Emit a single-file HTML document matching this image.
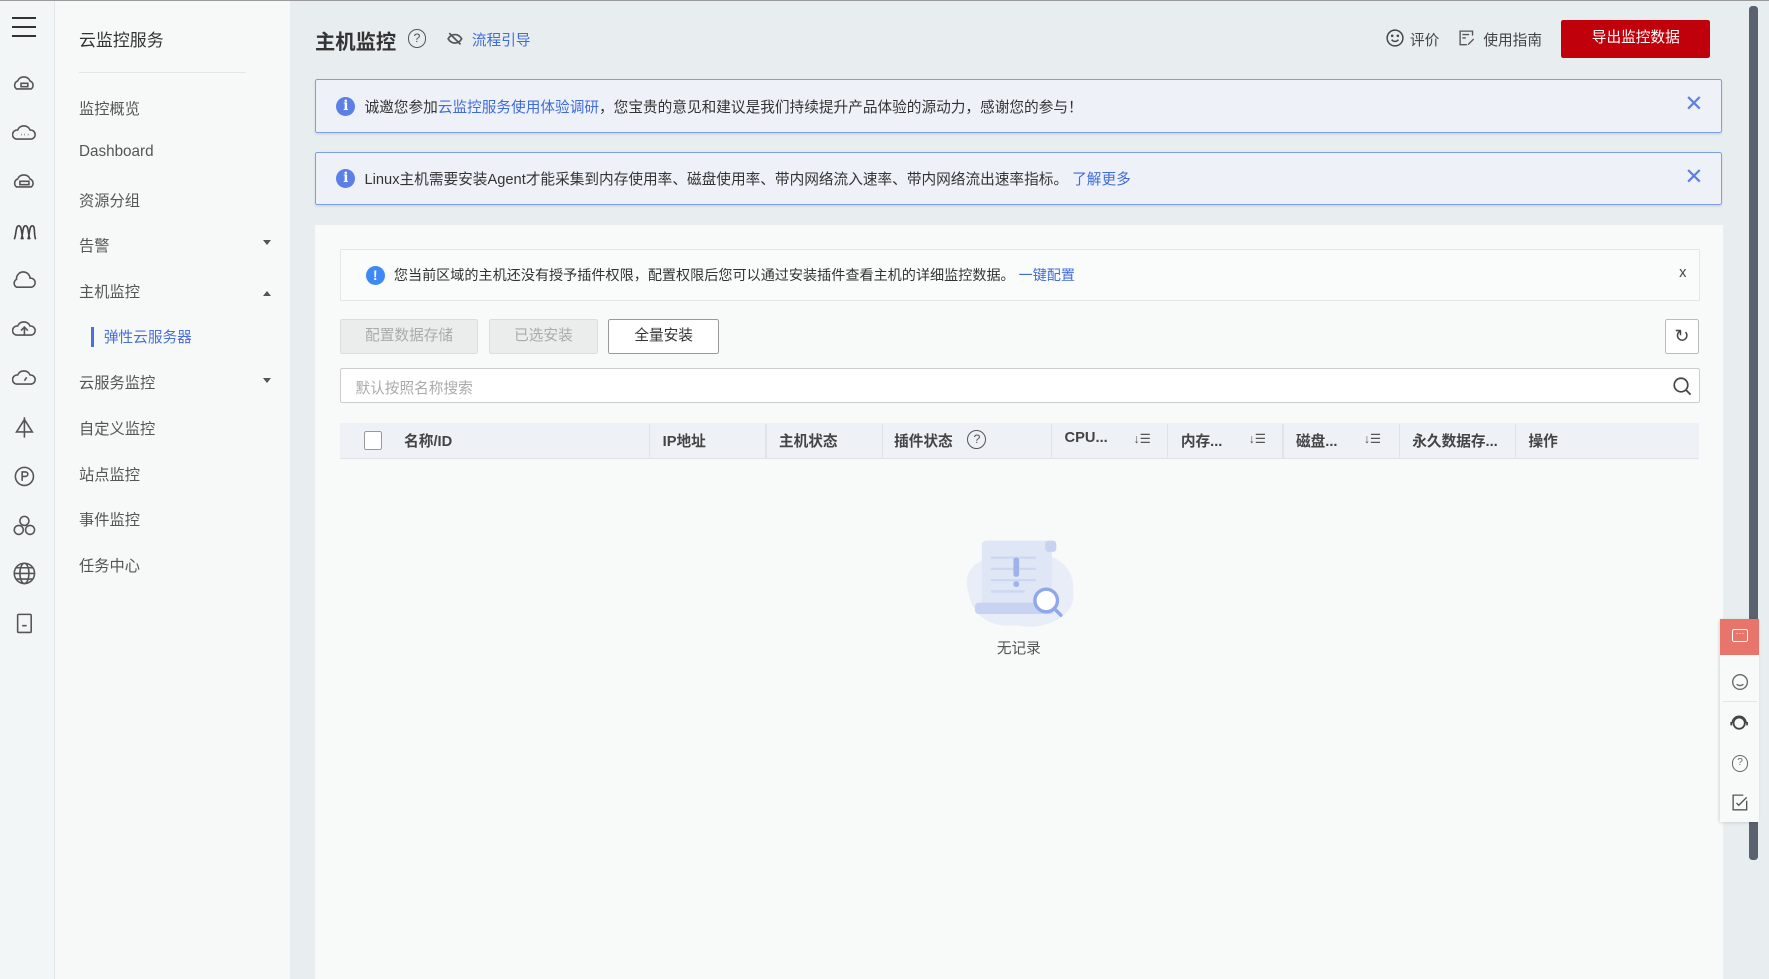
<!DOCTYPE html>
<html><head><meta charset="utf-8">
<style>
html{zoom:1.1289}
body{margin:0;width:1567px;height:867px;overflow:hidden;position:relative;background:#e8eef0;font-family:"Liberation Sans","Noto Sans CJK SC",sans-serif;color:#333;font-size:13px}
.a{position:absolute}
.top{left:0;top:0;width:1567px;height:1px;background:#9a9a9a}
.ib{left:0;top:1px;width:48px;height:866px;background:#f3f6f6;border-right:1px solid #e3e6e6}
.sb{left:49px;top:1px;width:208px;height:866px;background:#f6f9f8}
.mi{position:absolute;left:70px;font-size:13.5px;color:#555}
.ic{position:absolute;left:11px;width:22px;height:22px}
.alert{left:279px;width:1245px;background:#eef2f8;border:1px solid #7f9ee8;border-radius:2px;box-shadow:0 1px 2px rgba(0,0,0,.1)}
.info{position:absolute;left:18px;top:15px;width:17px;height:17px;border-radius:50%;background:#5b7fe6;color:#fff;font-weight:bold;font-size:12px;text-align:center;line-height:17px;font-family:"DejaVu Serif",serif}
.x{position:absolute;right:16px;color:#5b7fe6;font-size:20px}
.lk{color:#3f6bde}
.btn{position:absolute;top:283px;height:29px;border:1px solid #ddd;background:#ebeded;color:#aaa;font-size:13px;text-align:center;line-height:29px;border-radius:2px}
.th{position:absolute;top:381px;font-size:13px;color:#444;font-weight:bold}
.sep{position:absolute;top:376px;width:1px;height:30px;background:#e0e3e8}
</style></head><body>
<div class="a top"></div>
<div class="a ib">
 <div style="position:absolute;left:11px;top:14px;width:21px">
  <div style="height:2px;background:#333;margin-bottom:6px"></div><div style="height:2px;background:#333;margin-bottom:6px"></div><div style="height:2px;background:#333"></div></div>
 <svg class="ic" style="top:63px" viewBox="0 0 22 22" fill="none" stroke="#555" stroke-width="1.4"><path d="M4 15a4 4 0 0 1 1-7 6 6 0 0 1 11 0 4 4 0 0 1 1 7z"/><rect x="8" y="10" width="6" height="3"/></svg>
 <svg class="ic" style="top:106px" viewBox="0 0 22 22" fill="none" stroke="#555" stroke-width="1.4"><path d="M4 16a4 4 0 0 1 1-8 6 6 0 0 1 11 0 4 4 0 0 1 1 8z"/><path d="M8 12h.5M11 12h.5M14 12h.5"/></svg>
 <svg class="ic" style="top:150px" viewBox="0 0 22 22" fill="none" stroke="#555" stroke-width="1.4"><path d="M4 15a4 4 0 0 1 1-7 6 6 0 0 1 11 0 4 4 0 0 1 1 7z"/><rect x="7" y="10" width="8" height="3"/></svg>
 <svg class="ic" style="top:193px" viewBox="0 0 22 22" fill="none" stroke="#444" stroke-width="1.4"><path d="M2 18c2-4 1-12 4-12s2 8 4 12M8 18c2-4 1-12 4-12s2 8 4 12M14 18c2-4 1-12 4-12s1 8 3 12"/></svg>
 <svg class="ic" style="top:236px" viewBox="0 0 22 22" fill="none" stroke="#555" stroke-width="1.4"><path d="M4 17a4 4 0 0 1 0-7 6 6 0 0 1 12-1 4 4 0 0 1 1 8z"/></svg>
 <svg class="ic" style="top:280px" viewBox="0 0 22 22" fill="none" stroke="#555" stroke-width="1.4"><path d="M4 16a4 4 0 0 1 1-8 6 6 0 0 1 11 0 4 4 0 0 1 1 8z"/><path d="M11 16v-6M8 12l3-3 3 3"/></svg>
 <svg class="ic" style="top:323px" viewBox="0 0 22 22" fill="none" stroke="#555" stroke-width="1.4"><path d="M4 16a4 4 0 0 1 1-8 6 6 0 0 1 11 0 4 4 0 0 1 1 8z"/><path d="M11 13l2-3"/></svg>
 <svg class="ic" style="top:367px" viewBox="0 0 22 22" fill="none" stroke="#555" stroke-width="1.4"><path d="M11 2v18M11 4L4 15h14z"/></svg>
 <svg class="ic" style="top:410px" viewBox="0 0 22 22" fill="none" stroke="#555" stroke-width="1.4"><circle cx="11" cy="11" r="8"/><path d="M9 15V7h3a2 2 0 0 1 0 4H9"/></svg>
 <svg class="ic" style="top:453px" viewBox="0 0 22 22" fill="none" stroke="#555" stroke-width="1.4"><circle cx="11" cy="7" r="4"/><circle cx="6" cy="15" r="4"/><circle cx="16" cy="15" r="4"/></svg>
 <svg class="ic" style="top:496px" viewBox="0 0 22 22" fill="none" stroke="#555" stroke-width="1.4"><circle cx="11" cy="11" r="9"/><ellipse cx="11" cy="11" rx="4" ry="9"/><path d="M2 11h18M4 6h14M4 16h14"/></svg>
 <svg class="ic" style="top:540px" viewBox="0 0 22 22" fill="none" stroke="#555" stroke-width="1.4"><rect x="5" y="3" width="12" height="16" rx="1"/><path d="M9 13h4"/></svg>
</div>
<div class="a sb"></div>
<div class="mi" style="top:23px;font-size:15px;color:#333">云监控服务</div>
<div class="a" style="left:70px;top:64px;width:148px;height:1px;background:#e3e6e6"></div>
<div class="mi" style="top:86px">监控概览</div>
<div class="mi" style="top:127px">Dashboard</div>
<div class="mi" style="top:167px">资源分组</div>
<div class="mi" style="top:207px">告警</div><div class="a" style="left:233px;top:213px;border:4px solid transparent;border-top:5px solid #555"></div>
<div class="mi" style="top:248px">主机监控</div><div class="a" style="left:233px;top:254px;border:4px solid transparent;border-bottom:5px solid #555"></div>
<div class="a" style="left:81px;top:290px;width:2px;height:17px;background:#4a6fde"></div>
<div class="mi" style="left:92px;top:289px;color:#4a6fde;font-size:13px">弹性云服务器</div>
<div class="mi" style="top:329px">云服务监控</div><div class="a" style="left:233px;top:335px;border:4px solid transparent;border-top:5px solid #555"></div>
<div class="mi" style="top:369px">自定义监控</div>
<div class="mi" style="top:410px">站点监控</div>
<div class="mi" style="top:450px">事件监控</div>
<div class="mi" style="top:491px">任务中心</div>

<div class="a" style="left:279px;top:22px;font-size:18px;font-weight:bold;color:#333">主机监控</div>
<div class="a" style="left:361px;top:26px;width:15px;height:15px;border:1.3px solid #555;border-radius:50%;font-size:11px;text-align:center;line-height:15px;color:#555">?</div>
<svg class="a" style="left:396px;top:28px" width="14" height="12" viewBox="0 0 14 12" fill="none" stroke="#555" stroke-width="1.5"><path d="M1 6c3-5 9-5 12 0-3 5-9 5-12 0zM2 1l10 10"/></svg>
<div class="a lk" style="left:418px;top:26px;font-size:13px">流程引导</div>
<svg class="a" style="left:1228px;top:26px" width="16" height="16" viewBox="0 0 16 16" fill="none" stroke="#444" stroke-width="1.3"><circle cx="8" cy="8" r="7"/><path d="M5 9.5c1.5 2 4.5 2 6 0"/><circle cx="5.5" cy="6" r=".5"/><circle cx="10.5" cy="6" r=".5"/></svg>
<div class="a" style="left:1249px;top:26px;color:#444">评价</div>
<svg class="a" style="left:1292px;top:27px" width="14" height="14" viewBox="0 0 14 14" fill="none" stroke="#555" stroke-width="1.2"><path d="M12 5V1H1v12h6M3 4h6M3 7h3M8 13l5-5"/></svg>
<div class="a" style="left:1314px;top:26px;color:#444">使用指南</div>
<div class="a" style="left:1383px;top:18px;width:132px;height:33px;background:#c0000b;border-radius:2px;color:#fff;text-align:center;line-height:33px;font-size:13px">导出监控数据</div>

<div class="a alert" style="top:70px;height:46px"><div class="info">i</div><div class="a" style="left:43px;top:14px">诚邀您参加<span class="lk">云监控服务使用体验调研</span>，您宝贵的意见和建议是我们持续提升产品体验的源动力，感谢您的参与！</div><div class="x" style="top:10px">✕</div></div>
<div class="a alert" style="top:135px;height:45px"><div class="info" style="top:14px">i</div><div class="a" style="left:43px;top:13px">Linux主机需要安装Agent才能采集到内存使用率、磁盘使用率、带内网络流入速率、带内网络流出速率指标。 <span class="lk">了解更多</span></div><div class="x" style="top:9px">✕</div></div>

<div class="a" style="left:279px;top:199px;width:1247px;height:668px;background:#f7faf9"></div>
<div class="a" style="left:301px;top:221px;width:1203px;height:44px;background:#fafcfb;border:1px solid #e3e6e6"><div class="a" style="left:22px;top:14px;width:17px;height:17px;border-radius:50%;background:#3d8af7;color:#fff;font-weight:bold;font-size:12px;text-align:center;line-height:17px">!</div><div class="a" style="left:47px;top:13px;font-size:12.5px">您当前区域的主机还没有授予插件权限，配置权限后您可以通过安装插件查看主机的详细监控数据。 <span class="lk">一键配置</span></div><div class="a" style="right:11px;top:13px;font-size:13px;color:#444">x</div></div>
<div class="btn" style="left:301px;width:121px">配置数据存储</div>
<div class="btn" style="left:433px;width:95px">已选安装</div>
<div class="btn" style="left:539px;width:96px;background:#fff;border-color:#999;color:#333">全量安装</div>
<div class="btn" style="left:1475px;width:28px;background:#fff;border-color:#bbb;color:#444;font-size:16px">↻</div>
<div class="a" style="left:301px;top:326px;width:1203px;height:29px;background:#fff;border:1px solid #ccc;border-radius:2px"><div class="a" style="left:13px;top:7px;color:#aaa">默认按照名称搜索</div>
<svg class="a" style="right:6px;top:6px" width="18" height="18" viewBox="0 0 18 18" fill="none" stroke="#444" stroke-width="1.5"><circle cx="8" cy="8" r="6"/><path d="M12.5 12.5l4 4"/></svg></div>
<div class="a" style="left:301px;top:375px;width:1204px;height:31px;background:#eef1f6;border-bottom:1px solid #dfe3e8"></div>
<div class="a" style="left:322px;top:382px;width:15px;height:15px;border:1px solid #999;background:#fff;border-radius:2px"></div>
<div class="th" style="left:358px">名称/ID</div>
<div class="sep" style="left:575px"></div><div class="th" style="left:587px">IP地址</div>
<div class="sep" style="left:678px"></div><div class="th" style="left:690px">主机状态</div>
<div class="sep" style="left:781px"></div><div class="th" style="left:792px">插件状态</div><div class="a" style="left:857px;top:381px;width:15px;height:15px;border:1.3px solid #555;border-radius:50%;font-size:11px;text-align:center;line-height:15px;color:#555">?</div>
<div class="sep" style="left:931px"></div><div class="th" style="left:943px">CPU...</div><div class="a" style="left:1004px;top:382px;font-size:11px;color:#555">↓☰</div>
<div class="sep" style="left:1034px"></div><div class="th" style="left:1046px">内存...</div><div class="a" style="left:1106px;top:382px;font-size:11px;color:#555">↓☰</div>
<div class="sep" style="left:1136px"></div><div class="th" style="left:1148px">磁盘...</div><div class="a" style="left:1208px;top:382px;font-size:11px;color:#555">↓☰</div>
<div class="sep" style="left:1239px"></div><div class="th" style="left:1251px">永久数据存...</div>
<div class="sep" style="left:1342px"></div><div class="th" style="left:1354px">操作</div>

<svg class="a" style="left:848px;top:474px" width="108" height="90" viewBox="0 0 108 90">
<path d="M10 50c-8-25 20-35 45-30 25-10 50 5 48 30 3 25-30 35-50 30-25 3-40-10-43-30z" fill="#e8edf7"/>
<rect x="22" y="5" width="62" height="60" rx="4" fill="#dfe6f6"/><rect x="78" y="5" width="10" height="10" rx="3" fill="#c7d3f0"/>
<path d="M30 20h40M30 30h40M30 40h40M30 50h30" stroke="#ccd7f0" stroke-width="2"/>
<rect x="50" y="20" width="5" height="17" rx="2" fill="#9fb3ea"/><rect x="50" y="41" width="5" height="5" rx="2" fill="#9fb3ea"/>
<rect x="16" y="60" width="70" height="10" rx="3" fill="#c7d3f0"/>
<circle cx="79" cy="58" r="10" fill="#fff" stroke="#8fa8ea" stroke-width="3"/><path d="M86 65l6 6" stroke="#8fa8ea" stroke-width="3" stroke-linecap="round"/></svg>
<div class="a" style="left:883px;top:564px;color:#555">无记录</div>

<div class="a" style="left:1549px;top:5px;width:8px;height:757px;background:#5a6270;border-radius:3px"></div>
<div class="a" style="left:1524px;top:548px;width:34px;height:180px;background:#f8faf9;box-shadow:-1px 1px 3px rgba(0,0,0,.15)">
 <div style="height:32px;background:#e8756c;position:relative"><div class="a" style="left:10px;top:9px;width:13px;height:10px;border:1.3px solid #fff;border-radius:2px;color:#fff;font-size:8px;line-height:6px;text-align:center">···</div></div>
 <svg class="a" style="left:9px;top:48px" width="16" height="16" viewBox="0 0 16 16" fill="none" stroke="#666" stroke-width="1.2"><circle cx="8" cy="8" r="6.5"/><path d="M5 10c2 1.5 4 1.5 6 0"/></svg>
 <div class="a" style="left:2px;top:73px;width:30px;height:1px;background:#e3e6e6"></div>
 <svg class="a" style="left:8px;top:84px" width="18" height="18" viewBox="0 0 18 18" fill="none" stroke="#444" stroke-width="1.6"><circle cx="9" cy="9" r="5"/><path d="M3 9a6 6 0 0 1 12 0M2 8v3M16 8v3"/></svg>
 <div class="a" style="left:10px;top:121px;width:13px;height:13px;border:1.2px solid #666;border-radius:50%;font-size:9px;text-align:center;line-height:13px;color:#666">?</div>
 <svg class="a" style="left:10px;top:155px" width="15" height="15" viewBox="0 0 15 15" fill="none" stroke="#555" stroke-width="1.2"><path d="M13 6v8H1V1h9M4 8l2 2 7-7"/></svg>
</div>
</body></html>
